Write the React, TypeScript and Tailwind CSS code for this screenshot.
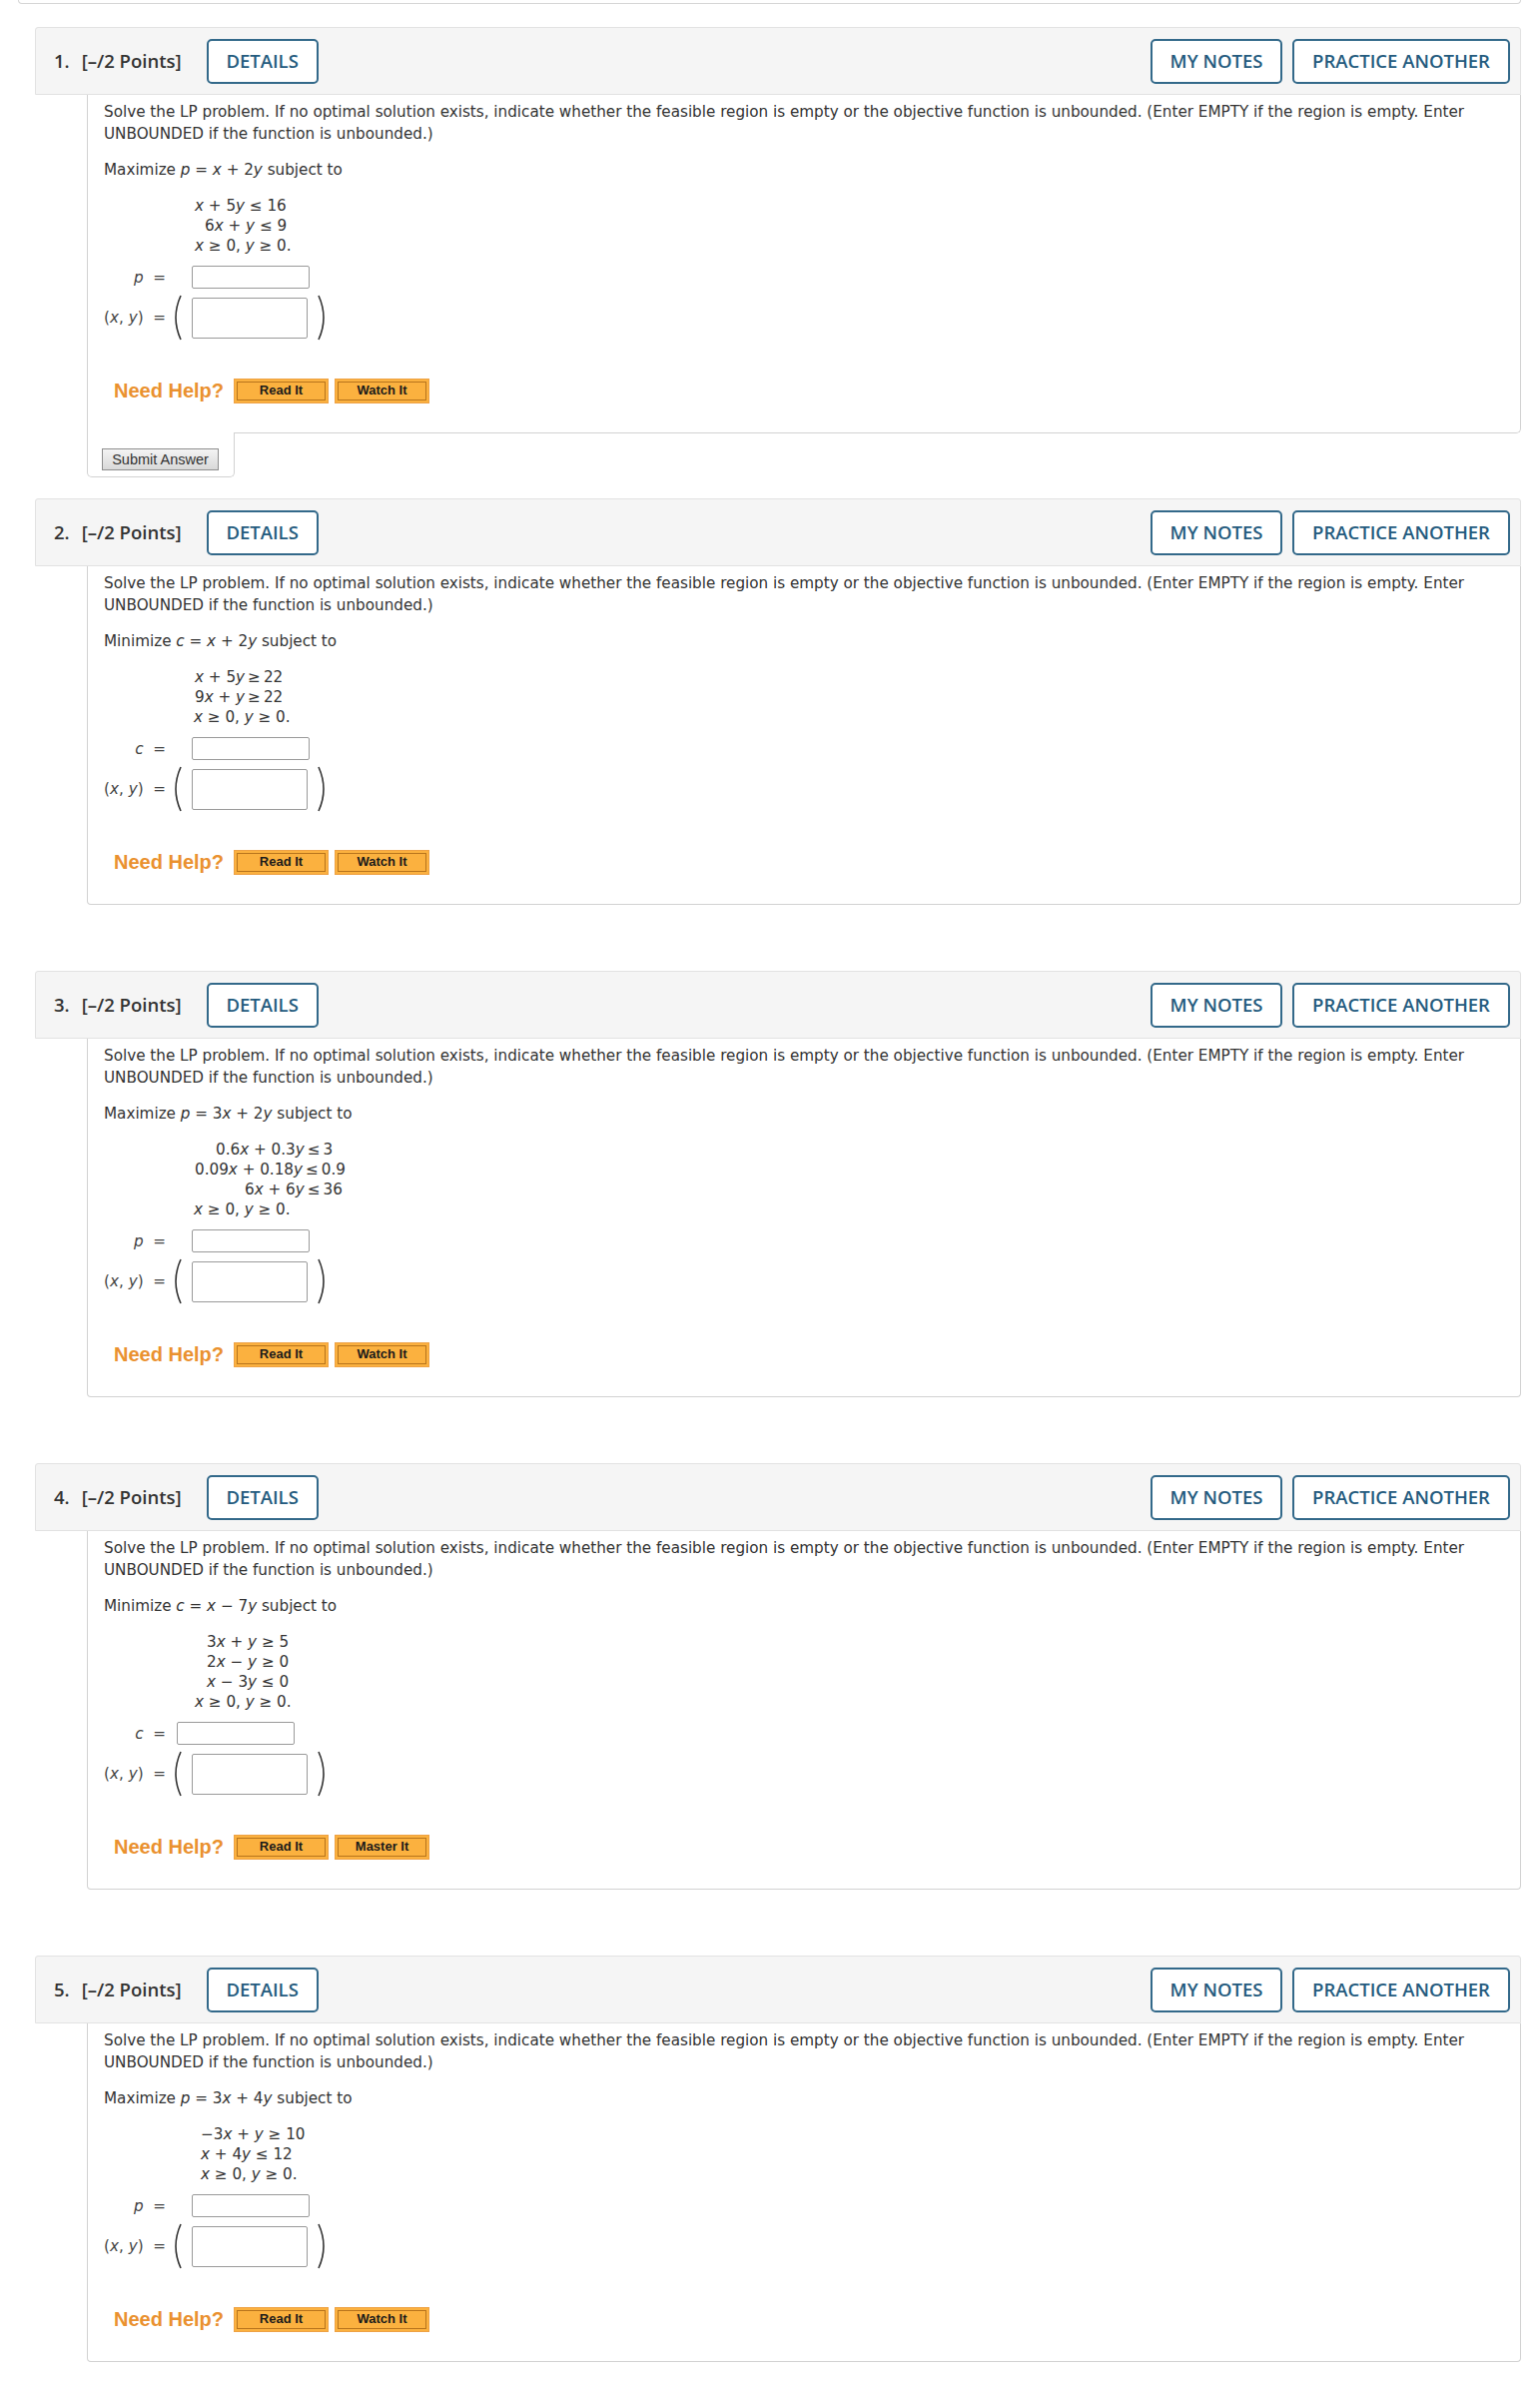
import type { ReactNode } from "react";

interface ConstraintLine {
  readonly ml: number;
  readonly text: ReactNode;
}

interface Problem {
  readonly num: number;
  readonly statement: ReactNode;
  readonly varName: string;
  readonly lines: readonly ConstraintLine[];
  readonly helpSecond: string;
  readonly inputMl: number;
  readonly submit?: boolean;
}

const v = (s: string) => <i>{s}</i>;
const T = "\u2009";

const problems: readonly Problem[] = [
  {
    num: 1,
    statement: (
      <>
        Maximize {v("p")} = {v("x")} + 2{v("y")} subject to
      </>
    ),
    varName: "p",
    lines: [
      { ml: 91, text: <>{v("x")} + 5{v("y")} ≤ 16</> },
      { ml: 101, text: <>6{v("x")} + {v("y")} ≤ 9</> },
      { ml: 91, text: <>{v("x")} ≥ 0, {v("y")} ≥ 0.</> },
    ],
    helpSecond: "Watch It",
    inputMl: 26,
    submit: true,
  },
  {
    num: 2,
    statement: (
      <>
        Minimize {v("c")} = {v("x")} + 2{v("y")} subject to
      </>
    ),
    varName: "c",
    lines: [
      { ml: 91, text: <>{v("x")} + 5{v("y")}{T}≥{T}22</> },
      { ml: 91, text: <>9{v("x")} + {v("y")}{T}≥{T}22</> },
      { ml: 90, text: <>{v("x")} ≥ 0, {v("y")} ≥ 0.</> },
    ],
    helpSecond: "Watch It",
    inputMl: 26,
  },
  {
    num: 3,
    statement: (
      <>
        Maximize {v("p")} = 3{v("x")} + 2{v("y")} subject to
      </>
    ),
    varName: "p",
    lines: [
      { ml: 112, text: <>0.6{v("x")} + 0.3{v("y")}{T}≤{T}3</> },
      { ml: 91, text: <>0.09{v("x")} + 0.18{v("y")}{T}≤{T}0.9</> },
      { ml: 141, text: <>6{v("x")} + 6{v("y")}{T}≤{T}36</> },
      { ml: 90, text: <>{v("x")} ≥ 0, {v("y")} ≥ 0.</> },
    ],
    helpSecond: "Watch It",
    inputMl: 26,
  },
  {
    num: 4,
    statement: (
      <>
        Minimize {v("c")} = {v("x")} − 7{v("y")} subject to
      </>
    ),
    varName: "c",
    lines: [
      { ml: 103, text: <>3{v("x")} + {v("y")} ≥ 5</> },
      { ml: 103, text: <>2{v("x")} − {v("y")} ≥ 0</> },
      { ml: 103, text: <>{v("x")} − 3{v("y")} ≤ 0</> },
      { ml: 91, text: <>{v("x")} ≥ 0, {v("y")} ≥ 0.</> },
    ],
    helpSecond: "Master It",
    inputMl: 11,
  },
  {
    num: 5,
    statement: (
      <>
        Maximize {v("p")} = 3{v("x")} + 4{v("y")} subject to
      </>
    ),
    varName: "p",
    lines: [
      { ml: 97, text: <>−3{v("x")} + {v("y")} ≥ 10</> },
      { ml: 97, text: <>{v("x")} + 4{v("y")} ≤ 12</> },
      { ml: 97, text: <>{v("x")} ≥ 0, {v("y")} ≥ 0.</> },
    ],
    helpSecond: "Watch It",
    inputMl: 26,
  },
];

function Paren({ right }: { right?: boolean }) {
  return (
    <svg width="14" height="46" viewBox="0 0 14 46" className="shrink-0">
      <path
        d={right ? "M3 1 Q13 23 3 45" : "M11 1 Q1 23 11 45"}
        fill="none"
        stroke="#333"
        strokeWidth="1.6"
      />
    </svg>
  );
}

function HelpButton({ label }: { label: string }) {
  return (
    <div className="h-[25px] w-[95px] border border-[#eea245] bg-[#fbb13f] p-[2px]">
      <div className="flex h-full w-full items-center justify-center border border-[#b8741c] font-['Liberation_Sans',Arial,sans-serif] text-[13px] font-bold text-[#1a1a1a]">
        {label}
      </div>
    </div>
  );
}

function HeaderButton({ label, w }: { label: string; w: string }) {
  return (
    <div
      className={`flex h-[45px] ${w} items-center justify-center rounded-[5px] border-2 border-[#33698a] bg-white text-[18.5px] font-semibold text-[#245b7e]`}
    >
      {label}
    </div>
  );
}

function ProblemBlock({ p }: { p: Problem }) {
  return (
    <div className="mb-[21px]">
      <div className="flex h-[68px] items-center rounded-t-[3px] border border-[#e2e2e2] bg-[#f5f5f5] pl-[18px] pr-[10px] font-['Open_Sans',sans-serif]">
        <span className="text-[18.5px] font-semibold text-[#333]">{p.num}.</span>
        <span className="ml-[12px] text-[18.5px] font-semibold text-[#333]">[–/2 Points]</span>
        <div className="ml-[25px]">
          <HeaderButton label="DETAILS" w="w-[112px]" />
        </div>
        <div className="ml-auto flex gap-[10px]">
          <HeaderButton label="MY NOTES" w="w-[132px]" />
          <HeaderButton label="PRACTICE ANOTHER" w="w-[218px]" />
        </div>
      </div>

      <div
        className={`ml-[52px] border border-t-0 border-[#d2d2d2] bg-white pl-[16px] pr-[16px] pt-[6px] pb-[30px] font-['DejaVu_Sans',Verdana,sans-serif] text-[15.2px] leading-[22px] text-[#333] ${
          p.submit ? "rounded-br-[5px]" : "rounded-b-[4px]"
        }`}
      >
        <p>
          Solve the LP problem. If no optimal solution exists, indicate whether the feasible region is empty or the
          objective function is unbounded. (Enter EMPTY if the region is empty. Enter UNBOUNDED if the function is
          unbounded.)
        </p>
        <p className="mt-[14px]">{p.statement}</p>

        <div className="mt-[15px] leading-[20px]">
          {p.lines.map((l, i) => (
            <div key={i} className="whitespace-nowrap" style={{ marginLeft: l.ml }}>
              {l.text}
            </div>
          ))}
        </div>

        <div className="mt-[10px] flex h-[23px] items-center">
          <div className="w-[62px] text-right text-[#444]">
            {v(p.varName)}&nbsp;&nbsp;=
          </div>
          <div
            className="h-[23px] w-[118px] rounded-[2px] border border-[#9a9a9a] bg-white"
            style={{ marginLeft: p.inputMl }}
          />
        </div>

        <div className="mt-[6px] flex h-[46px] items-center">
          <div className="w-[62px] whitespace-nowrap text-right text-[#444]">
            ({v("x")}, {v("y")})&nbsp;&nbsp;=
          </div>
          <div className="ml-[4px]">
            <Paren />
          </div>
          <div className="ml-[8px] h-[41px] w-[116px] rounded-[2px] border border-[#9a9a9a] bg-white" />
          <div className="ml-[8px]">
            <Paren right />
          </div>
        </div>

        <div className="mt-[38px] flex h-[24px] items-center pl-[10px]">
          <span className="font-['Liberation_Sans',Arial,sans-serif] text-[20px] font-bold text-[#ea912f]">
            Need Help?
          </span>
          <div className="ml-[10px] flex gap-[6px]">
            <HelpButton label="Read It" />
            <HelpButton label={p.helpSecond} />
          </div>
        </div>
      </div>

      {p.submit ? (
        <div className="-mt-px ml-[52px] h-[45px] w-[148px] rounded-b-[5px] border border-t-0 border-[#d2d2d2] bg-white pl-[14px] pt-[14px]">
          <button className="h-[22px] w-[117px] border border-[#8e8e8e] bg-gradient-to-b from-[#f4f4f4] to-[#d9d9d9] font-['Liberation_Sans',Arial,sans-serif] text-[14.5px] leading-none text-[#333]">
            Submit Answer
          </button>
        </div>
      ) : (
        <div className="h-[45px]" />
      )}
    </div>
  );
}

export default function App() {
  return (
    <div className="min-h-screen bg-white pl-[35px] pr-[19px]">
      <div className="-ml-[17px] h-[4px] rounded-b-[4px] border border-t-0 border-[#d6d6d6]" />
      <div className="mt-[23px]">
        {problems.map((p) => (
          <ProblemBlock key={p.num} p={p} />
        ))}
      </div>
    </div>
  );
}
